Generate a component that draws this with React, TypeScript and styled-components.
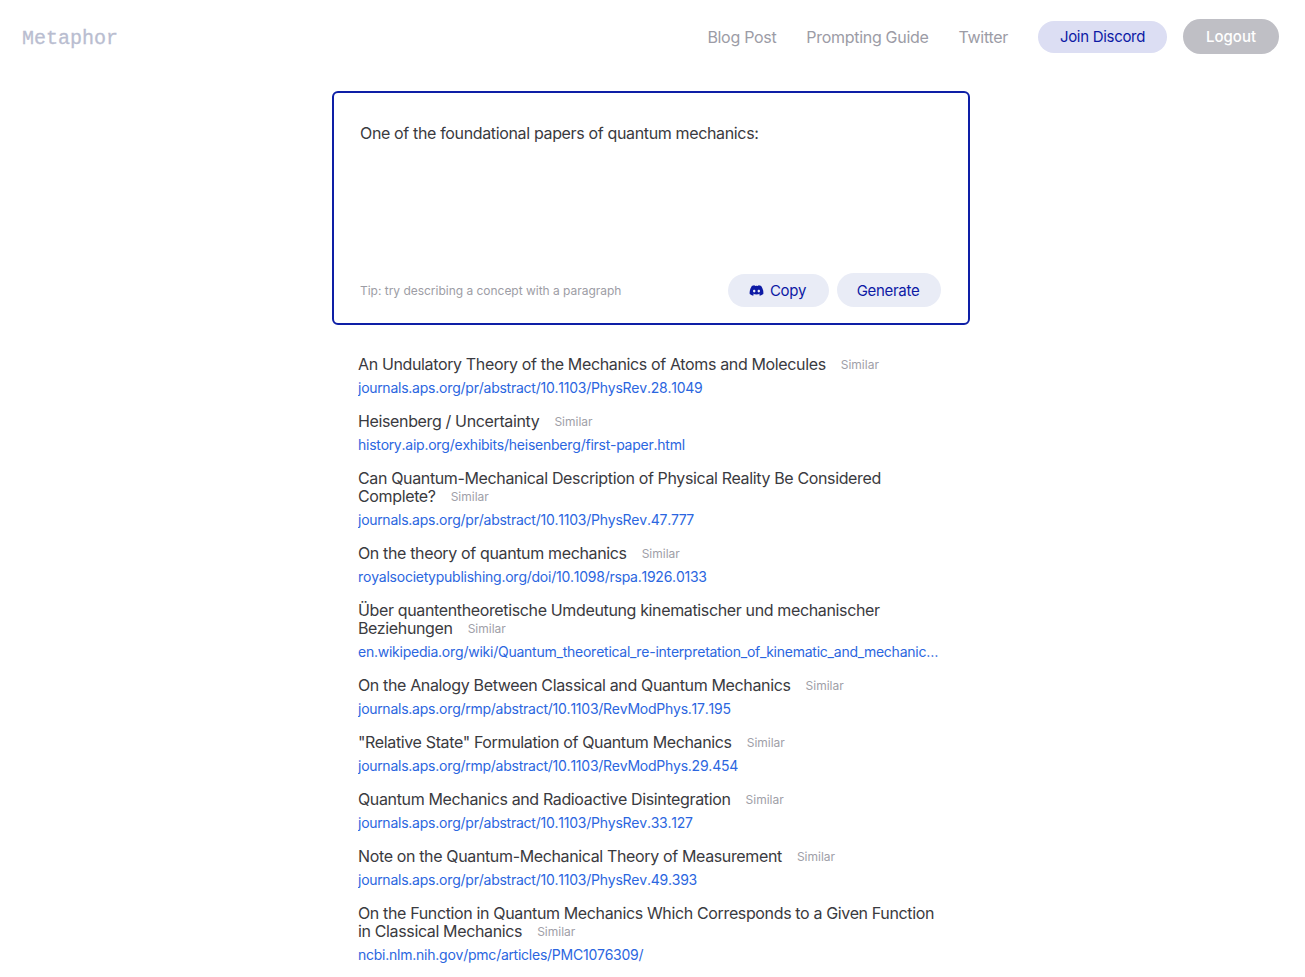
import { createGlobalStyle, styled } from 'styled-components';
import { FaDiscord } from 'react-icons/fa';

type Result = {
  title: string;
  url: string;
};

const results: Result[] = [
  {
    title: 'An Undulatory Theory of the Mechanics of Atoms and Molecules',
    url: 'journals.aps.org/pr/abstract/10.1103/PhysRev.28.1049',
  },
  {
    title: 'Heisenberg / Uncertainty',
    url: 'history.aip.org/exhibits/heisenberg/first-paper.html',
  },
  {
    title: 'Can Quantum-Mechanical Description of Physical Reality Be Considered Complete?',
    url: 'journals.aps.org/pr/abstract/10.1103/PhysRev.47.777',
  },
  {
    title: 'On the theory of quantum mechanics',
    url: 'royalsocietypublishing.org/doi/10.1098/rspa.1926.0133',
  },
  {
    title: 'Über quantentheoretische Umdeutung kinematischer und mechanischer Beziehungen',
    url: 'en.wikipedia.org/wiki/Quantum_theoretical_re-interpretation_of_kinematic_and_mechanical_relations',
  },
  {
    title: 'On the Analogy Between Classical and Quantum Mechanics',
    url: 'journals.aps.org/rmp/abstract/10.1103/RevModPhys.17.195',
  },
  {
    title: '"Relative State" Formulation of Quantum Mechanics',
    url: 'journals.aps.org/rmp/abstract/10.1103/RevModPhys.29.454',
  },
  {
    title: 'Quantum Mechanics and Radioactive Disintegration',
    url: 'journals.aps.org/pr/abstract/10.1103/PhysRev.33.127',
  },
  {
    title: 'Note on the Quantum-Mechanical Theory of Measurement',
    url: 'journals.aps.org/pr/abstract/10.1103/PhysRev.49.393',
  },
  {
    title: 'On the Function in Quantum Mechanics Which Corresponds to a Given Function in Classical Mechanics',
    url: 'ncbi.nlm.nih.gov/pmc/articles/PMC1076309/',
  },
];

const GlobalStyle = createGlobalStyle`
  html, body {
    margin: 0;
    padding: 0;
    background: #fff;
    overflow: hidden;
  }

  body {
    font-family: Inter, "Liberation Sans", sans-serif;
    color: #3a3a40;
  }
`;

const Header = styled.header`
  display: flex;
  align-items: center;
  justify-content: space-between;
  height: 73px;
  padding: 0 26px 0 22px;
`;

const Logo = styled.div`
  padding-top: 3px;
  font-family: "Liberation Mono", monospace;
  font-size: 20px;
  color: #b9bdd0;
  -webkit-text-stroke: 0.3px #b9bdd0;
`;

const Nav = styled.nav`
  display: flex;
  align-items: center;
`;

const NavLink = styled.a`
  font-size: 16px;
  letter-spacing: -0.3px;
  color: #9c9ca6;
  margin-right: 30px;
`;

const DiscordButton = styled.button`
  height: 32px;
  width: 129px;
  margin-right: 16px;
  border: none;
  border-radius: 16px;
  background: #dcdef3;
  color: #0d1aa5;
  font: 400 15px Inter, sans-serif;
  letter-spacing: -0.3px;
`;

const LogoutButton = styled.button`
  height: 35px;
  width: 96px;
  border: none;
  border-radius: 18px;
  background: #bfbfc5;
  color: #fff;
  font: 500 15px Inter, sans-serif;
`;

const Main = styled.main`
  width: 638px;
  margin: 18px 0 0 332px;
`;

const PromptCard = styled.section`
  box-sizing: border-box;
  display: flex;
  flex-direction: column;
  justify-content: space-between;
  height: 234px;
  padding: 28px 27px 16px 26px;
  border: 2px solid #0e1fa6;
  border-radius: 6px;
`;

const PromptText = styled.p`
  margin: 0;
  font-size: 16px;
  line-height: 24px;
  letter-spacing: -0.35px;
  color: #3a3a40;
`;

const PromptFooter = styled.div`
  display: flex;
  align-items: center;
`;

const Tip = styled.span`
  flex: 1;
  font-size: 12px;
  letter-spacing: -0.02px;
  color: #9d9da5;
`;

const PillButton = styled.button<{ $width: number; $height: number }>`
  display: flex;
  align-items: center;
  justify-content: center;
  gap: 6px;
  width: ${(p) => p.$width}px;
  height: ${(p) => p.$height}px;
  padding: 0 2px 0 0;
  border: none;
  border-radius: 17px;
  background: #e9ecf6;
  color: #0d1aa5;
  font: 400 15px Inter, sans-serif;
  letter-spacing: -0.3px;

  & + & {
    margin-left: 8px;
  }
`;

const ResultList = styled.div`
  display: flex;
  flex-direction: column;
  gap: 14px;
  width: 582px;
  margin: 30px 0 0 26px;
`;

const ResultItem = styled.article`
  display: flex;
  flex-direction: column;
  gap: 5px;
`;

const Title = styled.div`
  font-size: 16px;
  line-height: 18px;
  letter-spacing: -0.36px;
  color: #3a3a40;
`;

const Similar = styled.span`
  margin-left: 15px;
  font-size: 12px;
  line-height: 1;
  letter-spacing: 0;
  vertical-align: 1px;
  color: #a0a0a8;
`;

const Url = styled.a`
  font-size: 14px;
  line-height: 20px;
  letter-spacing: -0.24px;
  font-kerning: none;
  color: #2b66e0;
  white-space: nowrap;
  overflow: hidden;
  text-overflow: ellipsis;
`;

export default function App() {
  return (
    <>
      <GlobalStyle />
      <Header>
        <Logo>Metaphor</Logo>
        <Nav>
          <NavLink>Blog Post</NavLink>
          <NavLink>Prompting Guide</NavLink>
          <NavLink>Twitter</NavLink>
          <DiscordButton>Join Discord</DiscordButton>
          <LogoutButton>Logout</LogoutButton>
        </Nav>
      </Header>
      <Main>
        <PromptCard>
          <PromptText>One of the foundational papers of quantum mechanics:</PromptText>
          <PromptFooter>
            <Tip>Tip: try describing a concept with a paragraph</Tip>
            <PillButton $width={101} $height={33}>
              <FaDiscord size={15} />
              Copy
            </PillButton>
            <PillButton $width={104} $height={34}>
              Generate
            </PillButton>
          </PromptFooter>
        </PromptCard>
        <ResultList>
          {results.map((result) => (
            <ResultItem key={result.url}>
              <Title>
                {result.title}
                <Similar>Similar</Similar>
              </Title>
              <Url>{result.url}</Url>
            </ResultItem>
          ))}
        </ResultList>
      </Main>
    </>
  );
}
